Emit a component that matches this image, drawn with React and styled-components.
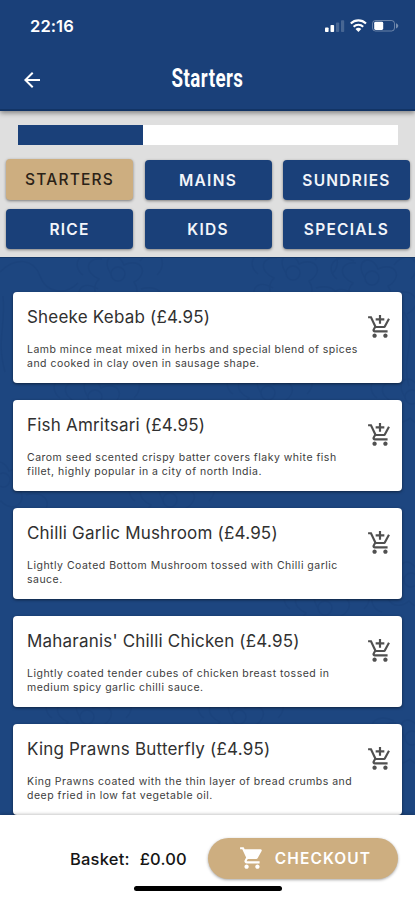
import React from "react";
import styled, { createGlobalStyle } from "styled-components";
import { MdAddShoppingCart, MdShoppingCart, MdArrowBack } from "react-icons/md";

const navy = "#1a4079";
const tan = "#cdae80";

const GlobalStyle = createGlobalStyle`
  * { box-sizing: border-box; }
  body { margin: 0; background: #fff; font-family: Inter, "Liberation Sans", sans-serif; }
  button { border: 0; padding: 0; font-family: inherit; }
`;

const Screen = styled.div`
  width: 415px;
  height: 900px;
  overflow: hidden;
  display: flex;
  flex-direction: column;
`;

const Header = styled.header`
  height: 111px;
  flex: none;
  background: ${navy};
  border-bottom: 2px solid #123465;
  box-shadow: 0 2px 5px rgba(0, 0, 0, 0.42);
  color: #fff;
  z-index: 2;
`;

const StatusBar = styled.div`
  height: 52px;
  padding: 0 15px 0 30px;
  display: flex;
  align-items: center;
  justify-content: space-between;
`;

const Clock = styled.span`
  font-size: 16.5px;
  font-weight: 600;
  line-height: 20px;
  letter-spacing: 0.1px;
`;

const StatusIcons = styled.svg`
  display: block;
  width: 76px;
  height: 14px;
`;

const TitleBar = styled.div`
  height: 56px;
  padding: 0 20px;
  display: grid;
  grid-template-columns: 24px 1fr 24px;
  align-items: center;
`;

const BackButton = styled.button`
  display: flex;
  background: none;
  color: #fff;
`;

const Title = styled.h1`
  margin: 0;
  text-align: center;
  font: 700 25px/30px Roboto, sans-serif;
  letter-spacing: 0.6px;
  transform: translateY(-1px) scaleX(0.75);
`;

const Filters = styled.section`
  height: 146px;
  flex: none;
  padding: 14px 5px 0 6px;
  background: #dfdfdf;
`;

const Progress = styled.div`
  height: 20px;
  margin: 0 12px 15px;
  background: #fff;
`;

const ProgressFill = styled.div`
  width: 125px;
  height: 100%;
  background: ${navy};
`;

const CategoryGrid = styled.div`
  display: grid;
  grid-template-columns: repeat(3, 127px);
  justify-content: space-between;
  row-gap: 9px;
`;

const Category = styled.button`
  height: ${(p) => (p.$active ? 41 : 40)}px;
  margin-top: ${(p) => (p.$active ? -1 : 0)}px;
  border-radius: 4px;
  background: ${(p) => (p.$active ? tan : navy)};
  color: ${(p) => (p.$active ? "#2b2217" : "#f2f5fa")};
  font-size: 15.5px;
  font-weight: ${(p) => (p.$active ? 500 : 600)};
  letter-spacing: ${(p) => (p.$active ? 1.2 : 1.25)}px;
  box-shadow: 0 1px 3px rgba(0, 0, 0, 0.45);
`;

const Menu = styled.main`
  position: relative;
  flex: 1;
  min-height: 0;
  overflow: hidden;
  padding: 34px 13px 0;
  display: flex;
  flex-direction: column;
  gap: 17px;
  background: #1d4680;
  border-top: 1px solid #143768;
`;

const Backdrop = styled.svg`
  position: absolute;
  inset: 0;
  width: 415px;
  height: 557px;
  fill: none;
  stroke: #173d75;
  stroke-width: 1.4;
  opacity: 0.33;
`;

const Card = styled.article`
  position: relative;
  flex: none;
  height: 91px;
  padding: 15px 9px 0 14px;
  display: flex;
  justify-content: space-between;
  background: #fff;
  border-radius: 4px;
  box-shadow: 0 1px 3px rgba(0, 0, 0, 0.5);
`;

const DishName = styled.h2`
  margin: 0 0 16px;
  font-size: 17px;
  font-weight: 400;
  line-height: 20px;
  letter-spacing: 0.2px;
  color: #303030;
  white-space: nowrap;
`;

const Description = styled.p`
  margin: 0;
  font-size: 10.5px;
  font-weight: 400;
  line-height: 14.3px;
  letter-spacing: 0.49px;
  color: #3c3c3c;
  white-space: pre;
`;

const AddButton = styled.button`
  align-self: flex-start;
  margin-top: 7px;
  flex: none;
  display: flex;
  background: none;
  color: #505050;
`;

const Footer = styled.footer`
  position: relative;
  flex: none;
  height: 85px;
  padding-top: 22px;
  background: #fff;
  box-shadow: 0 -1px 3px rgba(0, 0, 0, 0.22);
`;

const CheckoutRow = styled.div`
  height: 42px;
  padding: 0 17px 0 70px;
  display: flex;
  align-items: center;
  justify-content: space-between;
`;

const Basket = styled.div`
  display: flex;
  gap: 10px;
  padding-top: 2px;
  font-size: 16.5px;
  font-weight: 500;
  letter-spacing: 0.2px;
  color: #151515;
`;

const Checkout = styled.button`
  width: 190px;
  height: 41px;
  padding-left: 4px;
  display: flex;
  align-items: center;
  justify-content: center;
  gap: 10px;
  border-radius: 21px;
  background: ${tan};
  color: #fff;
  font-size: 15.5px;
  font-weight: 600;
  letter-spacing: 1.1px;
  box-shadow: 0 1px 3px rgba(0, 0, 0, 0.35);
`;

const HomeIndicator = styled.div`
  width: 148px;
  height: 5px;
  margin: 7px 0 0 134px;
  border-radius: 3px;
  background: #000;
`;

const categories = ["STARTERS", "MAINS", "SUNDRIES", "RICE", "KIDS", "SPECIALS"];

const dishes = [
  ["Sheeke Kebab (£4.95)", "Lamb mince meat mixed in herbs and special blend of spices\nand cooked in clay oven in sausage shape."],
  ["Fish Amritsari (£4.95)", "Carom seed scented crispy batter covers flaky white fish\nfillet, highly popular in a city of north India."],
  ["Chilli Garlic Mushroom (£4.95)", "Lightly Coated Bottom Mushroom tossed with Chilli garlic\nsauce."],
  ["Maharanis' Chilli Chicken (£4.95)", "Lightly coated tender cubes of chicken breast tossed in\nmedium spicy garlic chilli sauce."],
  ["King Prawns Butterfly (£4.95)", "King Prawns coated with the thin layer of bread crumbs and\ndeep fried in low fat vegetable oil."],
];

function PhoneStatus() {
  return (
    <StatusIcons viewBox="0 0 76 14" fill="#fff">
      <rect x="1" y="8.5" width="3.6" height="4.5" rx="0.8" />
      <rect x="6.5" y="6" width="3.6" height="7" rx="0.8" />
      <rect x="12" y="3.5" width="3.2" height="9.5" rx="0.8" opacity="0.2" />
      <rect x="17" y="1.3" width="3.2" height="11.7" rx="0.8" opacity="0.2" />
      <g fill="none" stroke="#fff" strokeWidth="2.1">
        <path d="M26.8 4.4a11 11 0 0 1 15.2 0" />
        <path d="M29.6 7.7a7 7 0 0 1 9.6 0" />
      </g>
      <path d="M31.5 10.1a4.2 4.2 0 0 1 5.8 0L34.4 13z" />
      <rect x="48.5" y="1.5" width="22" height="10.5" rx="3" fill="none" stroke="#fff" opacity="0.35" />
      <rect x="50.2" y="2.8" width="9" height="8.2" rx="1.4" />
      <path d="M72 4.2c3 1.2 3 4 0 5.2z" opacity="0.4" />
    </StatusIcons>
  );
}

function FloralBackdrop() {
  return (
    <Backdrop viewBox="0 0 415 557">
      <defs>
        <g id="bloom">
          <circle r="7" />
          <path d="M-7 0c-12-18 7-25 13-9 17-8 26 8 10 17 10 15-7 26-18 13-14 12-29-3-17-16-16-7-13-22 3-20M-20 15c-22-13-25 13-9 17M-18-17c-20-10-30 8-17 18M22-13c15-19 31 0 17 14M23 15c21-6 29 12 12 21" />
        </g>
      </defs>
      <use href="#bloom" x="118" y="16" />
      <use href="#bloom" x="293" y="15" />
      <use href="#bloom" x="372" y="20" />
      <path d="M0 14c16-16 34-13 40 4s25 20 38 7M3 38c3 34-7 42 2 76M404 54c15 25-4 46 5 74" />
      <use href="#bloom" x="268" y="135" />
      <use href="#bloom" x="95" y="139" />
      <use href="#bloom" x="412" y="139" />
      <use href="#bloom" x="170" y="242" />
      <use href="#bloom" x="3" y="222" />
      <use href="#bloom" x="325" y="350" />
      <use href="#bloom" x="411" y="322" />
      <use href="#bloom" x="87" y="459" />
      <use href="#bloom" x="239" y="459" />
      <use href="#bloom" x="412" y="480" />
    </Backdrop>
  );
}

export default function App() {
  return (
    <>
      <GlobalStyle />
      <Screen>
        <Header>
          <StatusBar>
            <Clock>22:16</Clock>
            <PhoneStatus />
          </StatusBar>
          <TitleBar>
            <BackButton aria-label="Back"><MdArrowBack size={26} /></BackButton>
            <Title>Starters</Title>
          </TitleBar>
        </Header>
        <Filters>
          <Progress><ProgressFill /></Progress>
          <CategoryGrid>
            {categories.map((name, i) => (
              <Category key={name} $active={i === 0}>{name}</Category>
            ))}
          </CategoryGrid>
        </Filters>
        <Menu>
          <FloralBackdrop />
          {dishes.map(([name, text]) => (
            <Card key={name}>
              <div>
                <DishName>{name}</DishName>
                <Description>{text}</Description>
              </div>
              <AddButton aria-label="Add to basket"><MdAddShoppingCart size={26} /></AddButton>
            </Card>
          ))}
        </Menu>
        <Footer>
          <CheckoutRow>
            <Basket><span>Basket:</span><span>£0.00</span></Basket>
            <Checkout><MdShoppingCart size={26} />CHECKOUT</Checkout>
          </CheckoutRow>
          <HomeIndicator />
        </Footer>
      </Screen>
    </>
  );
}
